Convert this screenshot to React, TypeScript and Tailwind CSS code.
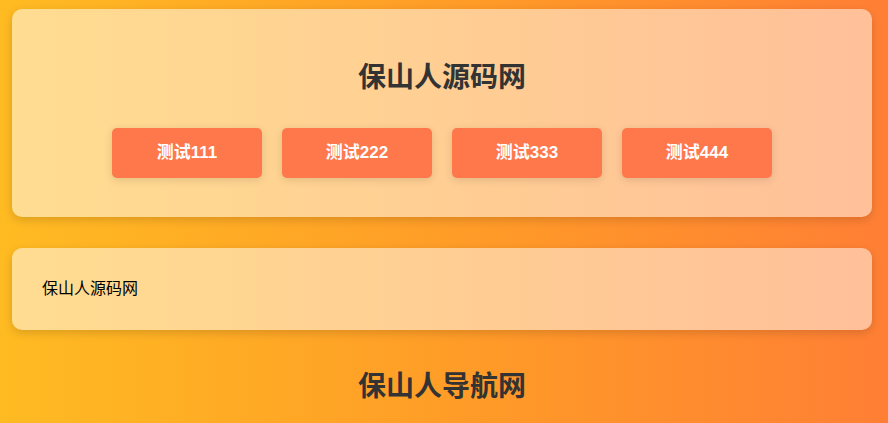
export default function App() {
  const buttons = ["测试111", "测试222", "测试333", "测试444"];
  return (
    <div
      className="min-h-[423px] w-full bg-[linear-gradient(90deg,#ffbb22_0%,#ff9a28_55%,#ff7f35_100%)] pl-[12px] pr-[16px] pt-[9px] pb-[40px]"
      style={{ fontFamily: '"Liberation Sans", "Noto Sans CJK SC", sans-serif' }}
    >
      <div className="rounded-[10px] bg-white/50 shadow-[0_3px_10px_rgba(0,0,0,0.15)] h-[208px] flex flex-col items-center">
        <h1 className="mt-[52px] text-[28px] leading-[34px] font-bold text-[#333]">保山人源码网</h1>
        <div className="mt-[33px] flex gap-[20px]">
          {buttons.map((b) => (
            <button
              key={b}
              className="w-[150px] h-[50px] rounded-[5px] bg-[#ff784c] text-white text-[17px] font-bold shadow-[0_2px_8px_rgba(0,0,0,0.12)]"
            >
              {b}
            </button>
          ))}
        </div>
      </div>
      <div className="mt-[31px] rounded-[10px] bg-white/50 shadow-[0_3px_10px_rgba(0,0,0,0.15)] h-[82px] px-[30px] flex items-center">
        <p className="text-[16px] leading-[22px] text-black">保山人源码网</p>
      </div>
      <h2 className="mt-[40px] text-center text-[28px] leading-[34px] font-bold text-[#333]">保山人导航网</h2>
    </div>
  );
}
